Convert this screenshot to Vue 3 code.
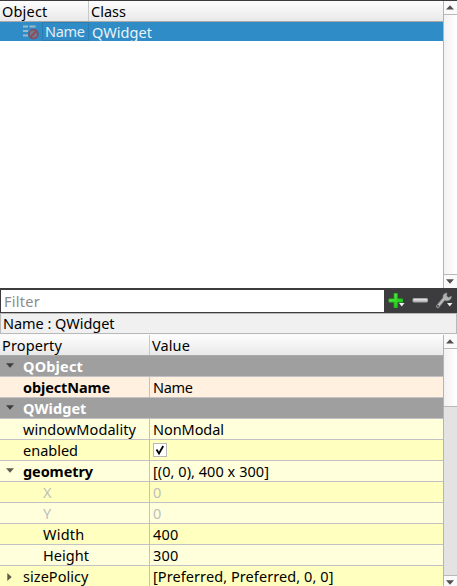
<script setup>
// Adjusts tracking so that a label takes the given advance width.
const vFit = {
  mounted(el, { value }) {
    const width = el.getBoundingClientRect().width
    el.style.letterSpacing = `${(value - width) / el.textContent.length}px`
  },
}

const rows = [
  { kind: 'group', name: 'QObject', nw: 60, arrow: 'down' },
  { kind: 'peach', name: 'objectName', nw: 87, bold: true, value: 'Name', vw: 39.5 },
  { kind: 'group', name: 'QWidget', nw: 63.5, arrow: 'down' },
  { kind: 'light', name: 'windowModality', nw: 113, value: 'NonModal', vw: 71 },
  { kind: 'deep', name: 'enabled', nw: 55, check: true },
  { kind: 'light', name: 'geometry', nw: 70, bold: true, arrow: 'down', value: '[(0, 0), 400 x 300]', vw: 116 },
  { kind: 'deep', name: 'X', nw: 9, child: true, off: true, value: '0', vw: 8.5 },
  { kind: 'light', name: 'Y', nw: 9, child: true, off: true, value: '0', vw: 8.5 },
  { kind: 'deep', name: 'Width', nw: 41.5, child: true, value: '400', vw: 25.5 },
  { kind: 'light', name: 'Height', nw: 46, child: true, value: '300', vw: 25.5 },
  { kind: 'deep', name: 'sizePolicy', nw: 65.5, arrow: 'right', value: '[Preferred, Preferred, 0, 0]', vw: 180.5 },
]
</script>

<template>
  <main class="panel">
    <section class="inspector">
      <div class="tree">
        <div class="head">
          <div class="object-col"><span v-fit="45.5">Object</span></div>
          <div class="class-col"><span v-fit="35">Class</span></div>
        </div>
        <div class="selected">
          <svg class="widget-icon" width="17" height="16" viewBox="0 0 17 16">
            <g stroke="#9cb9cb" stroke-width="1.800">
              <path d="M0 2.500h5M6.500 2.500h6M0 7h5M6.500 7h4M0 11.500h5" />
            </g>
            <circle cx="10.500" cy="10" r="4.500" fill="#74788f" stroke="#8a4a5c" stroke-width="1.600" />
            <path d="M7.500 13l6-6" stroke="#8f4c59" stroke-width="1.800" />
          </svg>
          <div class="edit"><span v-fit="39.5">Name</span></div>
          <span v-fit="60" class="class-name">QWidget</span>
        </div>
      </div>
      <div class="scroll">
        <div class="step"><svg width="8" height="5" viewBox="0 0 8 5"><path d="M0 4.500L4 .3l4 4.200z" fill="#505050" /></svg></div>
        <div class="thumb"></div>
        <div class="step end"><svg width="8" height="5" viewBox="0 0 8 5"><path d="M0 .3h8L4 4.700z" fill="#505050" /></svg></div>
      </div>
    </section>

    <section class="toolbar">
      <div class="filter"><span v-fit="36">Filter</span></div>
      <svg class="tools" width="73" height="25" viewBox="0 0 73 25">
        <defs>
          <linearGradient id="green" x2="1" y2="1"><stop stop-color="#8af27c" /><stop offset=".5" stop-color="#35db2b" /><stop offset="1" stop-color="#16b80e" /></linearGradient>
          <linearGradient id="silver" x2="0" y2="1"><stop stop-color="#eee" /><stop offset="1" stop-color="#b5b5b5" /></linearGradient>
        </defs>
        <path d="M10.200 5.500h3v5.500h5.300v3h-5.300v5.500h-3v-5.500h-5.200v-3h5.200z" fill="url(#green)" stroke="#22c41b" />
        <path d="M15 15h5.500l-2.750 3.500z" fill="#eee" />
        <rect x="29" y="10.500" width="14.500" height="3.500" rx=".8" fill="url(#silver)" stroke="#aaa" />
        <path d="M53.800 18.300l7-8.500" stroke="#929592" stroke-width="3.500" stroke-linecap="round" />
        <path d="M60 11c-2-3-.5-5.600 3-6l-.5 3 2 1.600 2.800-1.300c.3 3.200-3 5.200-5.900 4.100z" fill="#b2b4b2" stroke="#929592" stroke-width=".6" />
        <path d="M54.500 17.500l6-7.300" stroke="#c5c7c5" stroke-width="1.300" />
        <circle cx="54" cy="18" r=".9" fill="#444" />
        <path d="M63 15h5.500l-2.750 3.500z" fill="#eee" />
      </svg>
    </section>

    <div class="caption"><span v-fit="111.5">Name : QWidget</span></div>

    <section class="properties">
      <div class="table">
        <div class="head">
          <div class="property-col"><span v-fit="60">Property</span></div>
          <div class="value-col"><span v-fit="38">Value</span></div>
        </div>
        <div v-for="row in rows" :key="row.name" class="row" :class="[row.kind, { off: row.off }]">
          <div class="name" :class="{ child: row.child, bold: row.bold }">
            <i v-if="row.arrow" class="arrow">
              <svg v-if="row.arrow === 'down'" width="8" height="5" viewBox="0 0 8 5"><path d="M0 .3h8L4 4.700z" /></svg>
              <svg v-else class="right" width="5" height="8" viewBox="0 0 5 8"><path d="M.3 0v8L4.700 4z" /></svg>
            </i>
            <span v-fit="row.nw">{{ row.name }}</span>
          </div>
          <div v-if="row.kind !== 'group'" class="value">
            <svg v-if="row.check" width="14" height="14" viewBox="0 0 14 14">
              <rect x=".5" y=".5" width="13" height="13" fill="#fff" stroke="#b8b8b8" />
              <path d="M3.500 6.500l2.500 4 4.200-7.500" fill="none" stroke="#000" stroke-width="1.800" />
            </svg>
            <span v-else v-fit="row.vw">{{ row.value }}</span>
          </div>
        </div>
      </div>
      <div class="scroll">
        <div class="step"><svg width="8" height="5" viewBox="0 0 8 5"><path d="M0 4.500L4 .3l4 4.200z" fill="#505050" /></svg></div>
        <div class="thumb short"></div>
        <div class="track"></div>
        <div class="step end last"><svg width="8" height="5" viewBox="0 0 8 5"><path d="M0 .3h8L4 4.700z" fill="#505050" /></svg></div>
      </div>
    </section>
  </main>
</template>

<style>
body { overflow: hidden; }
</style>

<style scoped>
* { box-sizing: border-box; }
.panel {
  width: 457px; height: 586px; display: flex; flex-direction: column;
  background: #fff; color: #000; overflow: hidden;
  font: 14.5px/20px "Noto Sans", "Open Sans", sans-serif; white-space: pre;
}
svg { display: block; flex: none; }
span { display: inline-block; flex: none; }
.inspector { height: 288px; display: flex; border-top: 1px solid #3c3b3d; flex: none; }
.tree, .table { flex: 1; min-width: 0; background: #fff; }
.head {
  height: 21px; display: flex; border-bottom: 1px solid #a9a9a9;
  background: linear-gradient(#fdfdfd, #e9e9e9); line-height: 21px;
}
.object-col { width: 89px; padding-left: 2px; border-right: 1px solid #c8c8c8; }
.class-col { padding-left: 2px; }
.selected { height: 19px; display: flex; align-items: center; background: #308cc6; color: #fff; line-height: 18px; }
.widget-icon { margin-left: 23px; }
.edit { width: 47px; height: 19px; margin-left: 2px; padding-left: 2px; border: 1px solid #2c7eb2; color: #e5eef5; line-height: 16px; }
.class-name { margin-left: 3px; color: #eaf3f8; }
.scroll { width: 14px; flex: none; display: flex; flex-direction: column; border-left: 1px solid #b4b4b4; }
.step { height: 14px; flex: none; display: flex; align-items: center; justify-content: center; background: #fafafa; border-bottom: 1px solid #b8b8b8; padding-right: 1px; }
.step.end { border-bottom: 0; border-top: 1px solid #b8b8b8; }
.thumb { flex: 1; background: linear-gradient(90deg, #f2f2f2, #fff); }
.thumb.short { flex: none; height: 58px; border-bottom: 1px solid #b8b8b8; }
.track { flex: 1; background: #e3e3e3; }
.step.last { height: 11px; padding-top: 2px; }
.toolbar { height: 25px; display: flex; align-items: center; flex: none; background: #3c3b3d; }
.filter { width: 383px; height: 22px; margin-left: 1px; padding-left: 3px; background: #fff; color: #8b8b8b; line-height: 23px; }
.caption { height: 21px; flex: none; padding-left: 2px; border: 1px solid #b9b9b9; background: #f0f0f0; line-height: 19px; }
.properties { height: 252px; padding-top: 1px; display: flex; flex: none; background: #fafafa; }
.property-col { width: 150px; padding-left: 2px; border-right: 1px solid #c8c8c8; }
.value-col { padding-left: 2px; }
.row { height: 21px; display: flex; border-bottom: 1px solid #c2c2c6; line-height: 20px; }
.name { width: 150px; display: flex; padding-left: 6px; border-right: 1px solid #c2c2c6; }
.name > span:first-child { margin-left: 17px; }
.name.child > span { margin-left: 37px; }
.arrow { width: 17px; flex: none; padding-top: 7px; }
.arrow path { fill: #5d5d4d; }
.right { margin-left: 1px; }
.value { flex: 1; padding: 0 0 0 3px; display: flex; align-items: center; }
.group { background: #9f9f9f; color: #fff; font-weight: 700; }
.group .name { border-right: 0; }
.group .arrow path { fill: #3e3e3e; }
.bold { font-weight: 700; }
.peach { background: #fff0df; }
.light { background: #ffffdc; }
.deep { background: #ffffbf; }
.off { color: #bebebe; }
</style>
